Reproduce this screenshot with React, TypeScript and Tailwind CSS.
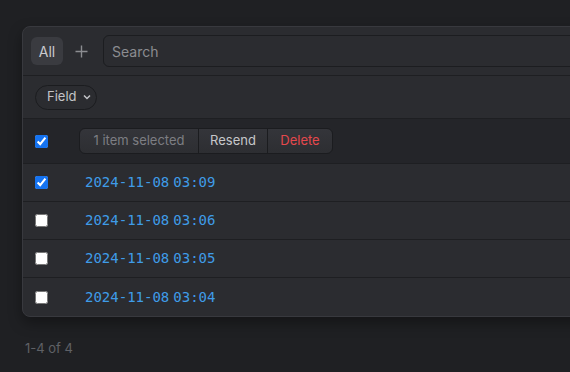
import React from "react";

const rows = [
  { d: "2024-11-08", t: "03:09", c: true },
  { d: "2024-11-08", t: "03:06", c: false },
  { d: "2024-11-08", t: "03:05", c: false },
  { d: "2024-11-08", t: "03:04", c: false },
];

export default function App() {
  return (
    <div
      className="w-[570px] h-[372px] overflow-hidden bg-[#1f2023] pt-[26px] pl-[22px]"
      style={{ fontFamily: "Inter, 'Noto Sans', sans-serif" }}
    >
      <div className="w-[620px] rounded-lg border border-[#38393e] bg-[#2b2c30] shadow-[0_6px_14px_rgba(0,0,0,0.35)] overflow-hidden">
        {/* toolbar */}
        <div className="h-[49px] flex items-center pl-2 border-b border-[#1e1f22]">
          <button className="w-8 h-7 rounded-md bg-[#3a3b40] text-[14px] text-[#c9cacd] flex items-center justify-center">
            All
          </button>
          <button className="w-8 h-7 ml-[2px] flex items-center justify-center text-[#8c8d91]">
            <svg width="13" height="13" viewBox="0 0 13 13" fill="none" stroke="currentColor" strokeWidth="1.4">
              <path d="M6.5 0.5v12M0.5 6.5h12" />
            </svg>
          </button>
          <div className="ml-[6px] flex-1 h-8 rounded-md border border-[#1c1d20] bg-[#2b2c30] flex items-center pl-2 text-[14px] text-[#8b8c90]">
            Search
          </div>
        </div>
        {/* filter row */}
        <div className="h-[43px] flex items-center pl-3 border-b border-[#1e1f22]">
          <div className="h-[25px] w-[62px] rounded-full border border-[#1b1c1f] flex items-center pl-[11px] text-[13px] text-[#c3c4c7]">
            Field
            <svg className="ml-[6px]" width="8" height="6" viewBox="0 0 8 6" fill="none" stroke="currentColor" strokeWidth="1.5">
              <path d="M1 1.5l3 3 3-3" />
            </svg>
          </div>
        </div>
        {/* selection header */}
        <div className="h-[45px] flex items-center pl-3 bg-[#242529] border-b border-[#1e1f22]">
          <div className="w-[44px] flex items-center">
            <input type="checkbox" defaultChecked className="m-0 w-[13px] h-[13px] accent-[#1573f0]" />
          </div>
          <div className="flex h-[26px] rounded-md border border-[#1b1c1f] overflow-hidden text-[13px] bg-gradient-to-b from-[#34353a] to-[#2d2e32]">
            <div className="w-[119px] flex items-center justify-center text-[#7d7e83] border-r border-[#1b1c1f]">
              1 item selected
            </div>
            <div className="w-[69px] flex items-center justify-center text-[#c6c7ca] border-r border-[#1b1c1f]">
              Resend
            </div>
            <div className="w-[64px] flex items-center justify-center text-[#e5484d]">Delete</div>
          </div>
        </div>
        {rows.map((r, i) => (
          <div
            key={i}
            className={`h-[38px] flex items-center pl-3 ${i < rows.length - 1 ? "border-b border-[#1e1f22]" : ""}`}
          >
            <div className="w-[44px] flex items-center">
              <input type="checkbox" defaultChecked={r.c} className="m-0 w-[13px] h-[13px] accent-[#1573f0]" />
            </div>
            <div
              className="pl-[6px] text-[14px] text-[#3f9ce8] flex"
              style={{ fontFamily: "'DejaVu Sans Mono', monospace" }}
            >
              <span>{r.d}</span>
              <span className="ml-[4px]">{r.t}</span>
            </div>
          </div>
        ))}
      </div>
      <div className="mt-[22px] pl-[3px] text-[13px] text-[#5f6166]">1-4 of 4</div>
    </div>
  );
}
